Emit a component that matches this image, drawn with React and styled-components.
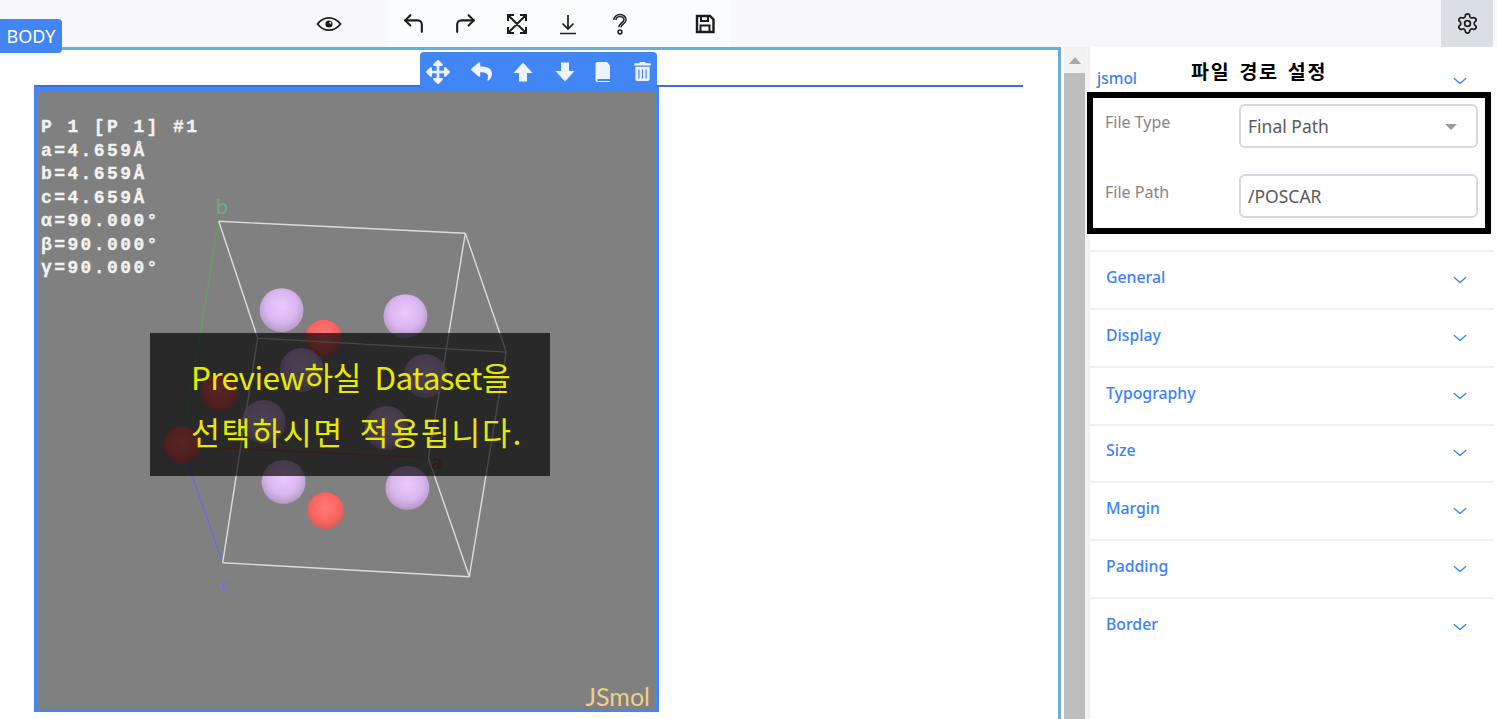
import styled, { createGlobalStyle } from "styled-components";
import { ChevronDown, CornerUpLeft, CornerUpRight, Settings } from "lucide-react";
import { FaArrowsAlt, FaReply, FaTrashAlt } from "react-icons/fa";

const sections = ["General", "Display", "Typography", "Size", "Margin", "Padding", "Border"];

const infoLines = ["P 1 [P 1] #1", "a=4.659Å", "b=4.659Å", "c=4.659Å", "α=90.000°", "β=90.000°", "γ=90.000°"];

const cellEdges = [
  [219, 221, 466, 233],
  [219, 221, 258, 338],
  [466, 233, 507, 352],
  [258, 338, 507, 352],
  [466, 233, 429, 458],
  [507, 352, 470, 577],
  [258, 338, 223, 563],
  [223, 563, 470, 577],
  [429, 458, 470, 577],
];

const purpleAtoms = [
  [282, 310], [406, 316], [302, 370], [426, 376],
  [264, 422], [387, 428], [284, 482], [408, 488],
];

const redAtoms = [[324, 338], [220, 393], [182, 445], [326, 511]];

const EyeIcon = () => (
  <svg width="26" height="24" viewBox="0 0 26 24" fill="none" stroke="currentColor" strokeWidth="1.800">
    <path d="M1.500 12C5 7.500 9 5.800 13 5.800s8 1.700 11.500 6.200C21 16.500 17 18.200 13 18.200S5 16.500 1.500 12z" />
    <circle cx="13" cy="12" r="3.600" fill="currentColor" stroke="none" />
    <circle cx="14.300" cy="10.800" r="1" fill="#f8f8fa" stroke="none" />
  </svg>
);

const ExpandIcon = () => (
  <svg width="22" height="22" viewBox="0 0 22 22" fill="none" stroke="currentColor" strokeWidth="2">
    <path d="M2 8V2h6M14 2h6v6M20 14v6h-6M8 20H2v-6M3 3l16 16M19 3L3 19" />
  </svg>
);

const DownloadIcon = () => (
  <svg width="24" height="24" viewBox="0 0 24 24" fill="none" stroke="currentColor" strokeWidth="1.700">
    <path d="M12 3v14M6.500 11.500l5.500 5.500 5.500-5.500M4 21.500h16" />
  </svg>
);

const HelpIcon = () => (
  <svg width="20" height="24" viewBox="0 0 20 24" fill="none">
    <path d="M5 8c0-2.700 2.200-4.500 5-4.500s5 1.800 5 4.300c0 3.700-5 3.500-5 7.500" stroke="currentColor" strokeWidth="3.600" />
    <path d="M5 8c0-2.700 2.200-4.500 5-4.500s5 1.800 5 4.300c0 3.700-5 3.500-5 7.500" stroke="#f8f8fa" strokeWidth="0.700" />
    <circle cx="10" cy="20" r="1.900" fill="#f8f8fa" stroke="currentColor" strokeWidth="1.500" />
  </svg>
);

const SaveIcon = () => (
  <svg width="22" height="22" viewBox="0 0 22 22" fill="none" stroke="currentColor" strokeWidth="2.400">
    <path d="M3 3h13l3.500 3.500V19H3z" />
    <path d="M7 3v5h7V3M6.500 19v-6.500h9V19" strokeWidth="2" />
  </svg>
);

const BlockArrow = ({ down }) => (
  <svg width="22" height="22" viewBox="0 0 22 22" fill="currentColor">
    <path d={down ? "M7 1.500h8V10h5.500L11 20.500 1.500 10H7z" : "M11 1.500L20.500 12H15v8.500H7V12H1.500z"} />
  </svg>
);

const PageIcon = () => (
  <svg width="22" height="22" viewBox="0 0 22 22" fill="currentColor">
    <path d="M5.500 1H15l3 3.500V18H6.500C5.700 18 5.300 18.500 5.300 19s.4 1 1.200 1H18v1H5.500C4.300 21 3.500 20 3.500 19V3C3.500 1.900 4.300 1 5.500 1z" />
  </svg>
);

const Crystal = () => (
  <ViewerDrawing viewBox="37 91 620 618">
    <defs>
      <radialGradient id="purpleAtom" cx="0.5" cy="0.42" r="0.6">
        <stop offset="0" stopColor="#ecc8ff" />
        <stop offset="0.6" stopColor="#d9b6ef" />
        <stop offset="1" stopColor="#b097c0" />
      </radialGradient>
      <radialGradient id="redAtom" cx="0.5" cy="0.42" r="0.6">
        <stop offset="0" stopColor="#ff7b76" />
        <stop offset="0.65" stopColor="#f96460" />
        <stop offset="1" stopColor="#c45f5c" />
      </radialGradient>
    </defs>
    <line x1="182" y1="446" x2="219" y2="221" stroke="#62a062" strokeWidth="1.300" />
    <line x1="182" y1="446" x2="223" y2="563" stroke="#6a6ae0" strokeWidth="1.300" />
    <line x1="182" y1="446" x2="429" y2="458" stroke="#c05050" strokeWidth="1.300" />
    {redAtoms.map(([cx, cy]) => (
      <circle key={`${cx}-${cy}`} cx={cx} cy={cy} r="18.500" fill="url(#redAtom)" />
    ))}
    {purpleAtoms.map(([cx, cy]) => (
      <circle key={`${cx}-${cy}`} cx={cx} cy={cy} r="22" fill="url(#purpleAtom)" />
    ))}
    {cellEdges.map(([x1, y1, x2, y2]) => (
      <line key={`${x1}-${y1}-${x2}`} x1={x1} y1={y1} x2={x2} y2={y2} stroke="#dcdcdc" strokeWidth="1.400" />
    ))}
    <AxisLabel x="216" y="214" fill="#6fae84">b</AxisLabel>
    <AxisLabel x="432" y="469" fill="#a84a4a">a</AxisLabel>
    <AxisLabel x="221" y="592" fill="#7272e6">c</AxisLabel>
  </ViewerDrawing>
);

export default function App() {
  return (
    <Page>
      <GlobalStyle />
      <TopBar>
        <ToolGroup>
          <EyeIcon />
        </ToolGroup>
        <MainTools>
          <ToolButton><CornerUpLeft size={25} strokeWidth={2} /></ToolButton>
          <ToolButton><CornerUpRight size={25} strokeWidth={2} /></ToolButton>
          <ToolButton><ExpandIcon /></ToolButton>
          <ToolButton><DownloadIcon /></ToolButton>
          <ToolButton><HelpIcon /></ToolButton>
          <SaveButton><SaveIcon /></SaveButton>
        </MainTools>
        <SettingsButton><Settings size={23} strokeWidth={1.800} /></SettingsButton>
      </TopBar>

      <Workspace>
        <Canvas>
          <BodyTag>BODY</BodyTag>
          <BodyBlock>
            <JsmolBox>
              <BlockToolbar>
                <BlockTool $gap={6}><FaArrowsAlt size={24} /></BlockTool>
                <BlockTool $gap={20}><FaReply size={21} /></BlockTool>
                <BlockTool $gap={20}><BlockArrow /></BlockTool>
                <BlockTool $gap={20}><BlockArrow down /></BlockTool>
                <BlockTool $gap={16}><PageIcon /></BlockTool>
                <BlockTool $gap={17}><FaTrashAlt size={19} /></BlockTool>
              </BlockToolbar>
              <Viewer>
                <Crystal />
                <InfoText>
                  {infoLines.map((line) => (
                    <div key={line}>{line}</div>
                  ))}
                </InfoText>
                <Caption>
                  <CaptionLine $spacing={-0.600}>Preview하실 Dataset을</CaptionLine>
                  <CaptionLine $spacing={1.600}>선택하시면 적용됩니다.</CaptionLine>
                </Caption>
                <Watermark>JSmol</Watermark>
              </Viewer>
            </JsmolBox>
          </BodyBlock>
        </Canvas>

        <ScrollGutter>
          <ScrollCap />
          <ScrollThumb />
        </ScrollGutter>

        <Sidebar>
          <PanelHead>
            <PanelName>jsmol</PanelName>
            <HeadChevron size={20} strokeWidth={1.300} />
            <Annotation>파일 경로 설정</Annotation>
          </PanelHead>
          <PathBox>
            <Field>
              <FieldLabel>File Type</FieldLabel>
              <FieldControl>
                Final Path
                <SelectCaret />
              </FieldControl>
            </Field>
            <Field>
              <FieldLabel>File Path</FieldLabel>
              <FieldControl>/POSCAR</FieldControl>
            </Field>
          </PathBox>
          <SectionList>
            {sections.map((name) => (
              <SectionRow key={name}>
                <SectionName>{name}</SectionName>
                <Chevron size={20} strokeWidth={1.300} />
              </SectionRow>
            ))}
          </SectionList>
        </Sidebar>
      </Workspace>
    </Page>
  );
}

const GlobalStyle = createGlobalStyle`
  html, body {
    margin: 0;
    height: 100%;
    background: #fff;
  }

  * {
    box-sizing: border-box;
  }
`;

const Page = styled.div`
  display: flex;
  flex-direction: column;
  width: 1497px;
  height: 719px;
  overflow: hidden;
  font-family: "Noto Sans", "Noto Sans CJK KR", sans-serif;
`;

const TopBar = styled.header`
  display: flex;
  flex: 0 0 47px;
  background: #f8f8fa;
  color: #1c1c1c;
`;

const ToolGroup = styled.div`
  display: flex;
  align-items: center;
  justify-content: flex-end;
  width: 388px;
  padding-right: 46px;
`;

const MainTools = styled.div`
  display: flex;
  align-items: center;
  width: 343px;
  background: #fafbfc;
`;

const ToolButton = styled.div`
  display: flex;
  align-items: center;
  justify-content: center;
  flex: 0 0 51.500px;
`;

const SaveButton = styled(ToolButton)`
  margin-left: 34px;
`;

const SettingsButton = styled.div`
  display: flex;
  align-items: center;
  justify-content: center;
  width: 52px;
  margin-left: 710px;
  background: #dadfe6;
`;

const Workspace = styled.div`
  display: flex;
  flex: 1;
  min-height: 0;
`;

const Canvas = styled.main`
  position: relative;
  flex: 0 0 1061px;
  padding: 35px 0 0 34px;
  border-top: 3px solid #6aaed6;
  border-right: 3px solid #6aaed6;
  background: #fff;
`;

const BodyTag = styled.div`
  position: absolute;
  top: -31px;
  left: 0;
  display: flex;
  align-items: center;
  justify-content: center;
  width: 62px;
  height: 34px;
  border-radius: 0 4px 4px 0;
  background: #4285f4;
  color: #fff;
  font-size: 18px;
`;

const BodyBlock = styled.div`
  width: 989px;
  border-top: 2px solid #3b6ee6;
`;

const JsmolBox = styled.div`
  position: relative;
  width: 625px;
  height: 625px;
  border: 3px solid #4285f4;
  border-top-width: 4px;
`;

const BlockToolbar = styled.div`
  position: absolute;
  top: -39px;
  right: -1px;
  display: flex;
  align-items: center;
  width: 237px;
  height: 39px;
  border-radius: 4px 4px 0 0;
  background: #4285f4;
  color: #eef3ff;
`;

const BlockTool = styled.div`
  display: flex;
  align-items: center;
  justify-content: center;
  flex: 0 0 22px;
  margin-left: ${({ $gap }) => $gap}px;
`;

const Viewer = styled.div`
  position: relative;
  width: 100%;
  height: 100%;
  background: #808080;
`;

const ViewerDrawing = styled.svg`
  display: block;
  width: 100%;
  height: 100%;
`;

const AxisLabel = styled.text`
  font-family: "Noto Sans", sans-serif;
  font-size: 20px;
`;

const InfoText = styled.div`
  position: absolute;
  top: 25px;
  left: 4px;
  color: #f2f2f2;
  font-family: "Liberation Mono", monospace;
  font-size: 18px;
  font-weight: 700;
  letter-spacing: 2.400px;
  line-height: 23.500px;
  -webkit-text-stroke: 0.3px #f2f2f2;
`;

const Caption = styled.div`
  position: absolute;
  top: 242px;
  left: 113px;
  width: 400px;
  height: 143px;
  padding: 16px 0 0 41px;
  background: rgba(0, 0, 0, 0.68);
  color: #e9e900;
  font-family: "Noto Sans CJK KR", "Noto Sans", sans-serif;
  font-size: 31.500px;
  font-weight: 400;
  line-height: 55px;
  word-spacing: 7px;
`;

const CaptionLine = styled.div`
  letter-spacing: ${({ $spacing }) => $spacing}px;
  white-space: nowrap;
`;

const Watermark = styled.div`
  position: absolute;
  right: 6px;
  bottom: 0;
  color: #efcf8a;
  font-family: "Lato", sans-serif;
  font-size: 25px;
  line-height: 26px;
`;

const ScrollGutter = styled.div`
  display: flex;
  flex-direction: column;
  flex: 0 0 25px;
  margin-left: 3px;
  border-right: 4px solid #f3f3f3;
  background: #f1f1f1;
`;

const ScrollCap = styled.div`
  display: flex;
  align-items: center;
  justify-content: center;
  flex: 0 0 26px;

  &::before {
    content: "";
    border-left: 6px solid transparent;
    border-right: 6px solid transparent;
    border-bottom: 7px solid #a8a8a8;
  }
`;

const ScrollThumb = styled.div`
  flex: 1;
  background: #bdbdbd;
`;

const Sidebar = styled.aside`
  flex: 0 0 405px;
  background: #fff;
  border-left: 1px solid #f0f0f0;
`;

const PanelHead = styled.div`
  position: relative;
  display: flex;
  align-items: flex-end;
  justify-content: space-between;
  height: 45px;
  padding: 0 24px 3px 7px;
`;

const PanelName = styled.span`
  color: #3b82f6;
  font-size: 15.500px;
  font-weight: 500;
`;

const Annotation = styled.div`
  position: absolute;
  top: 9px;
  left: 101px;
  color: #000;
  font-family: "Noto Sans CJK KR", sans-serif;
  font-size: 19.500px;
  font-weight: 700;
  letter-spacing: 1.700px;
  word-spacing: 3px;
  line-height: 30px;
  white-space: nowrap;
`;

const Chevron = styled(ChevronDown)`
  color: #3b82f6;
  transform: scaleX(1.150);
`;

const HeadChevron = styled(Chevron)`
  margin-bottom: -2px;
`;

const PathBox = styled.div`
  display: flex;
  flex-direction: column;
  gap: 26px;
  width: 404px;
  height: 142px;
  margin-left: -3px;
  padding: 6px 7px 0 12px;
  border: 6px solid #000;
`;

const Field = styled.div`
  display: flex;
  height: 44px;
`;

const FieldLabel = styled.label`
  flex: 0 0 134px;
  padding-top: 7px;
  color: #858585;
  font-size: 16px;
`;

const FieldControl = styled.div`
  position: relative;
  display: flex;
  align-items: center;
  flex: 1;
  padding-left: 7px;
  border: 2px solid #d4d9df;
  border-radius: 6px;
  color: #5a5a5a;
  font-size: 17.500px;
`;

const SelectCaret = styled.span`
  position: absolute;
  top: 18px;
  right: 19px;
  border-left: 6px solid transparent;
  border-right: 6px solid transparent;
  border-top: 6px solid #9a9a9a;
`;

const SectionList = styled.div`
  margin-top: 16px;
`;

const SectionRow = styled.div`
  display: flex;
  align-items: center;
  justify-content: space-between;
  height: 57.850px;
  padding: 0 24px 0 16px;
  border-top: 2px solid #f0f0f0;
`;

const SectionName = styled.span`
  color: #3b82f6;
  font-size: 15.800px;
  font-weight: 500;
  transform: translateY(-3px);
`;
